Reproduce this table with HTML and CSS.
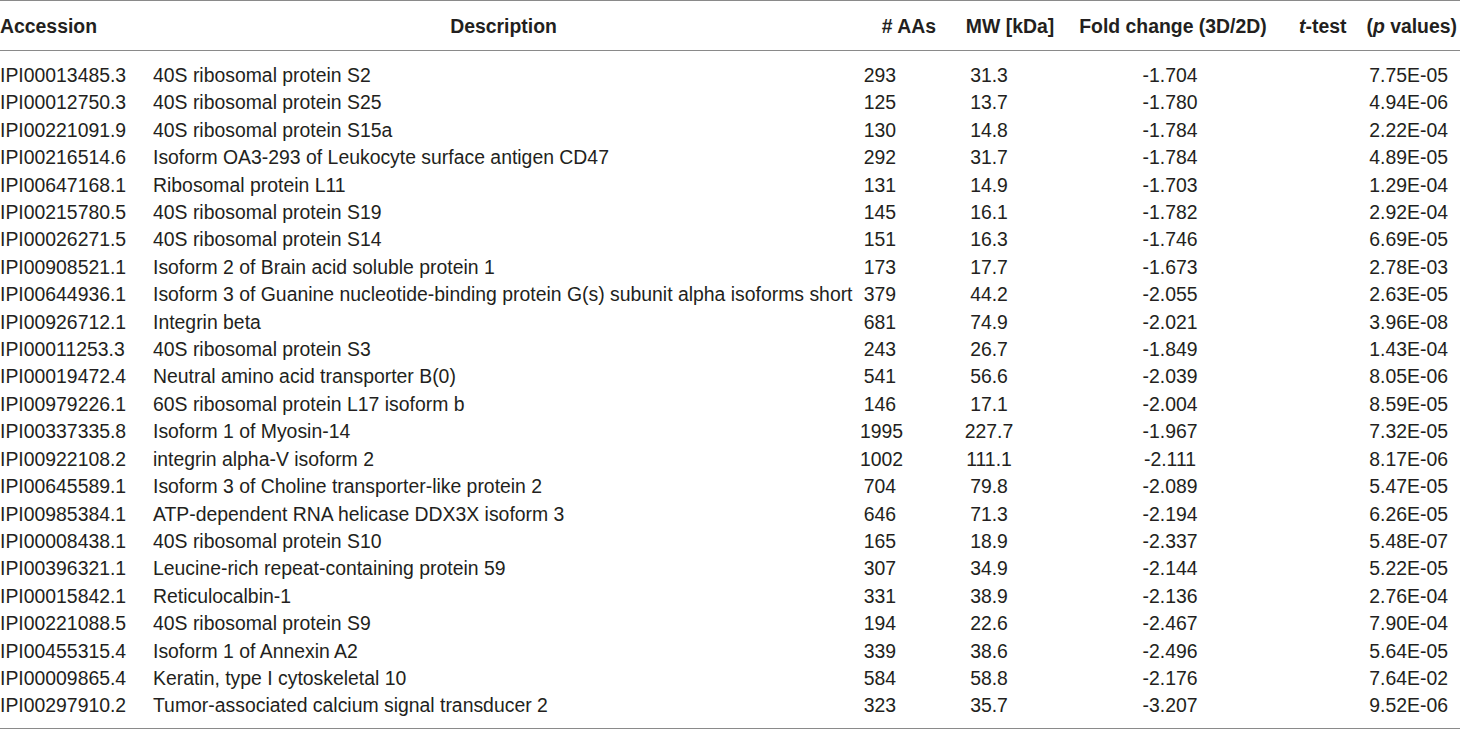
FILE: index.html
```html
<!DOCTYPE html>
<html lang="en">
<head>
<meta charset="utf-8">
<title>Proteins</title>
<link rel="stylesheet" href="styles.css">
</head>
<body>
<table class="data">
  <colgroup>
    <col class="c-acc"><col class="c-desc"><col class="c-aa"><col class="c-mw"><col class="c-fold"><col class="c-t">
  </colgroup>
  <thead>
    <tr>
      <th class="acc">Accession</th>
      <th class="desc">Description</th>
      <th class="aa"># AAs</th>
      <th class="mw">MW [kDa]</th>
      <th class="fold">Fold change (3D/2D)</th>
      <th class="t"><span class="tt"><i>t</i>-test</span><span class="pv">(<i>p</i> values)</span></th>
    </tr>
  </thead>
  <tbody>
    <tr><td>IPI00013485.3</td><td>40S ribosomal protein S2</td><td class="aa">293</td><td class="mw">31.3</td><td class="fold">-1.704</td><td class="t">7.75E-05</td></tr>
    <tr><td>IPI00012750.3</td><td>40S ribosomal protein S25</td><td class="aa">125</td><td class="mw">13.7</td><td class="fold">-1.780</td><td class="t">4.94E-06</td></tr>
    <tr><td>IPI00221091.9</td><td>40S ribosomal protein S15a</td><td class="aa">130</td><td class="mw">14.8</td><td class="fold">-1.784</td><td class="t">2.22E-04</td></tr>
    <tr><td>IPI00216514.6</td><td>Isoform OA3-293 of Leukocyte surface antigen CD47</td><td class="aa">292</td><td class="mw">31.7</td><td class="fold">-1.784</td><td class="t">4.89E-05</td></tr>
    <tr><td>IPI00647168.1</td><td>Ribosomal protein L11</td><td class="aa">131</td><td class="mw">14.9</td><td class="fold">-1.703</td><td class="t">1.29E-04</td></tr>
    <tr><td>IPI00215780.5</td><td>40S ribosomal protein S19</td><td class="aa">145</td><td class="mw">16.1</td><td class="fold">-1.782</td><td class="t">2.92E-04</td></tr>
    <tr><td>IPI00026271.5</td><td>40S ribosomal protein S14</td><td class="aa">151</td><td class="mw">16.3</td><td class="fold">-1.746</td><td class="t">6.69E-05</td></tr>
    <tr><td>IPI00908521.1</td><td>Isoform 2 of Brain acid soluble protein 1</td><td class="aa">173</td><td class="mw">17.7</td><td class="fold">-1.673</td><td class="t">2.78E-03</td></tr>
    <tr><td>IPI00644936.1</td><td>Isoform 3 of Guanine nucleotide-binding protein G(s) subunit alpha isoforms short</td><td class="aa">379</td><td class="mw">44.2</td><td class="fold">-2.055</td><td class="t">2.63E-05</td></tr>
    <tr><td>IPI00926712.1</td><td>Integrin beta</td><td class="aa">681</td><td class="mw">74.9</td><td class="fold">-2.021</td><td class="t">3.96E-08</td></tr>
    <tr><td>IPI00011253.3</td><td>40S ribosomal protein S3</td><td class="aa">243</td><td class="mw">26.7</td><td class="fold">-1.849</td><td class="t">1.43E-04</td></tr>
    <tr><td>IPI00019472.4</td><td>Neutral amino acid transporter B(0)</td><td class="aa">541</td><td class="mw">56.6</td><td class="fold">-2.039</td><td class="t">8.05E-06</td></tr>
    <tr><td>IPI00979226.1</td><td>60S ribosomal protein L17 isoform b</td><td class="aa">146</td><td class="mw">17.1</td><td class="fold">-2.004</td><td class="t">8.59E-05</td></tr>
    <tr><td>IPI00337335.8</td><td>Isoform 1 of Myosin-14</td><td class="aa">1995</td><td class="mw">227.7</td><td class="fold">-1.967</td><td class="t">7.32E-05</td></tr>
    <tr><td>IPI00922108.2</td><td>integrin alpha-V isoform 2</td><td class="aa">1002</td><td class="mw">111.1</td><td class="fold">-2.111</td><td class="t">8.17E-06</td></tr>
    <tr><td>IPI00645589.1</td><td>Isoform 3 of Choline transporter-like protein 2</td><td class="aa">704</td><td class="mw">79.8</td><td class="fold">-2.089</td><td class="t">5.47E-05</td></tr>
    <tr><td>IPI00985384.1</td><td>ATP-dependent RNA helicase DDX3X isoform 3</td><td class="aa">646</td><td class="mw">71.3</td><td class="fold">-2.194</td><td class="t">6.26E-05</td></tr>
    <tr><td>IPI00008438.1</td><td>40S ribosomal protein S10</td><td class="aa">165</td><td class="mw">18.9</td><td class="fold">-2.337</td><td class="t">5.48E-07</td></tr>
    <tr><td>IPI00396321.1</td><td>Leucine-rich repeat-containing protein 59</td><td class="aa">307</td><td class="mw">34.9</td><td class="fold">-2.144</td><td class="t">5.22E-05</td></tr>
    <tr><td>IPI00015842.1</td><td>Reticulocalbin-1</td><td class="aa">331</td><td class="mw">38.9</td><td class="fold">-2.136</td><td class="t">2.76E-04</td></tr>
    <tr><td>IPI00221088.5</td><td>40S ribosomal protein S9</td><td class="aa">194</td><td class="mw">22.6</td><td class="fold">-2.467</td><td class="t">7.90E-04</td></tr>
    <tr><td>IPI00455315.4</td><td>Isoform 1 of Annexin A2</td><td class="aa">339</td><td class="mw">38.6</td><td class="fold">-2.496</td><td class="t">5.64E-05</td></tr>
    <tr><td>IPI00009865.4</td><td>Keratin, type I cytoskeletal 10</td><td class="aa">584</td><td class="mw">58.8</td><td class="fold">-2.176</td><td class="t">7.64E-02</td></tr>
    <tr><td>IPI00297910.2</td><td>Tumor-associated calcium signal transducer 2</td><td class="aa">323</td><td class="mw">35.7</td><td class="fold">-3.207</td><td class="t">9.52E-06</td></tr>
  </tbody>
</table>
</body>
</html>
```

FILE: styles.css
```css
html, body {
  margin: 0;
  padding: 0;
  background: #ffffff;
}

body {
  font-family: "Liberation Sans", Arial, Helvetica, sans-serif;
  color: #231f20;
}

.data {
  width: 1460px;
  border-collapse: collapse;
  table-layout: fixed;
  font-size: 19.4px;
  border-top: 1px solid #8a8a8a;
  border-bottom: 1px solid #8a8a8a;
}

.c-acc { width: 153px; }
.c-desc { width: 707px; }
.c-aa { width: 80px; }
.c-mw { width: 130px; }
.c-fold { width: 200px; }
.c-t { width: 190px; }

.data th {
  font-weight: bold;
  height: 49px;
  padding: 0;
  line-height: 24px;
  border-bottom: 1px solid #8a8a8a;
  white-space: nowrap;
  vertical-align: middle;
}

.data td {
  padding: 0;
  height: 27.4px;
  line-height: 27.4px;
  white-space: nowrap;
  vertical-align: middle;
  font-weight: normal;
}

.data tbody tr:first-child td {
  padding-top: 11px;
}

.data tbody tr:last-child td {
  padding-bottom: 8px;
}

th.acc { text-align: left; }
th.desc { text-align: center; padding-right: 6px; }
th.aa { text-align: right; padding-right: 4px; }
th.mw { text-align: center; padding-left: 10px; }
th.fold { text-align: center; padding-left: 6px; }
th.t { text-align: right; padding-right: 3px; }

.tt { margin-right: 20px; }

td.aa { text-align: right; padding-right: 44px; }
td.mw { text-align: center; padding-right: 32px; }
td.fold { text-align: center; }
td.t { text-align: right; padding-right: 12px; }
```
